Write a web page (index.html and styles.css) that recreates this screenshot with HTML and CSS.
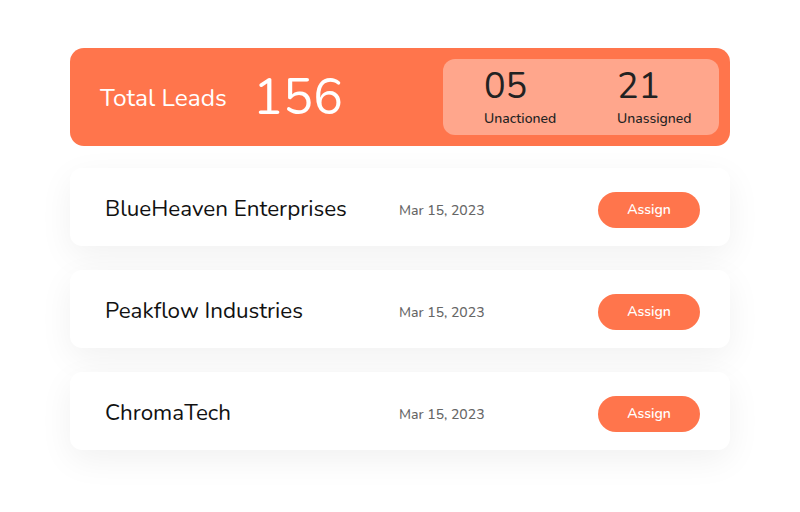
FILE: index.html
```html
<!DOCTYPE html>
<html>
<head>
<meta charset="utf-8">
<link rel="stylesheet" href="styles.css">
</head>
<body>
<div class="wrap">
  <div class="summary">
    <div class="total">
      <span class="total-label">Total Leads</span>
      <span class="total-num">156</span>
    </div>
    <div class="stats">
      <div class="stat s1">
        <div class="stat-num">05</div>
        <div class="stat-label">Unactioned</div>
      </div>
      <div class="stat s2">
        <div class="stat-num">21</div>
        <div class="stat-label">Unassigned</div>
      </div>
    </div>
  </div>
  <div class="rows">
    <div class="row">
      <div class="name">BlueHeaven Enterprises</div>
      <div class="date">Mar 15, 2023</div>
      <button class="btn">Assign</button>
    </div>
    <div class="row">
      <div class="name">Peakflow Industries</div>
      <div class="date">Mar 15, 2023</div>
      <button class="btn">Assign</button>
    </div>
    <div class="row">
      <div class="name">ChromaTech</div>
      <div class="date">Mar 15, 2023</div>
      <button class="btn">Assign</button>
    </div>
  </div>
</div>
</body>
</html>
```
FILE: styles.css
```css
html, body {
  margin: 0;
  padding: 0;
  background: #ffffff;
  font-family: "Nunito", "Lato", "Open Sans", sans-serif;
}
.wrap {
  width: 660px;
  padding: 48px 70px;
  display: flex;
  flex-direction: column;
  gap: 22px;
}
.summary {
  height: 98px;
  background: #ff754c;
  border-radius: 14px;
  display: flex;
  align-items: center;
  justify-content: space-between;
  padding: 0 11px 0 30px;
  box-sizing: border-box;
}
.total {
  display: flex;
  align-items: center;
  color: #fff;
}
.total-label {
  font-size: 24.5px;
  font-weight: 400;
  width: 153px;
  padding-top: 2px;
}
.total-num {
  font-size: 50px;
  font-weight: 400;
}
.stats {
  width: 276px;
  height: 76px;
  background: #ffa68c;
  border-radius: 12px;
  display: flex;
  box-sizing: border-box;
  padding: 8px 0 0 41px;
  color: #222;
}
.stat { display: flex; flex-direction: column; }
.s1 { width: 133px; }
.stat-num {
  font-size: 36px;
  line-height: 40px;
}
.stat-label {
  font-size: 14px;
  font-weight: 500;
  margin-top: 2px;
}
.rows {
  display: flex;
  flex-direction: column;
  gap: 24px;
}
.row {
  height: 78px;
  background: #fff;
  border-radius: 12px;
  box-shadow: 0 10px 34px rgba(0,0,0,0.06);
  display: flex;
  align-items: center;
  padding: 0 30px 0 35px;
  box-sizing: border-box;
}
.name {
  width: 294px;
  font-size: 22.4px;
  color: #111;
  padding-top: 3px;
}
.date {
  font-size: 14px;
  font-weight: 500;
  color: #666;
  flex: 1;
  padding-top: 7px;
}
.btn {
  width: 102px;
  height: 36px;
  border: none;
  border-radius: 18px;
  background: #ff754c;
  color: #fff;
  font-family: inherit;
  font-size: 14px;
  font-weight: 600;
  padding: 0 0 2px 0;
  margin-top: 6px;
}
```
